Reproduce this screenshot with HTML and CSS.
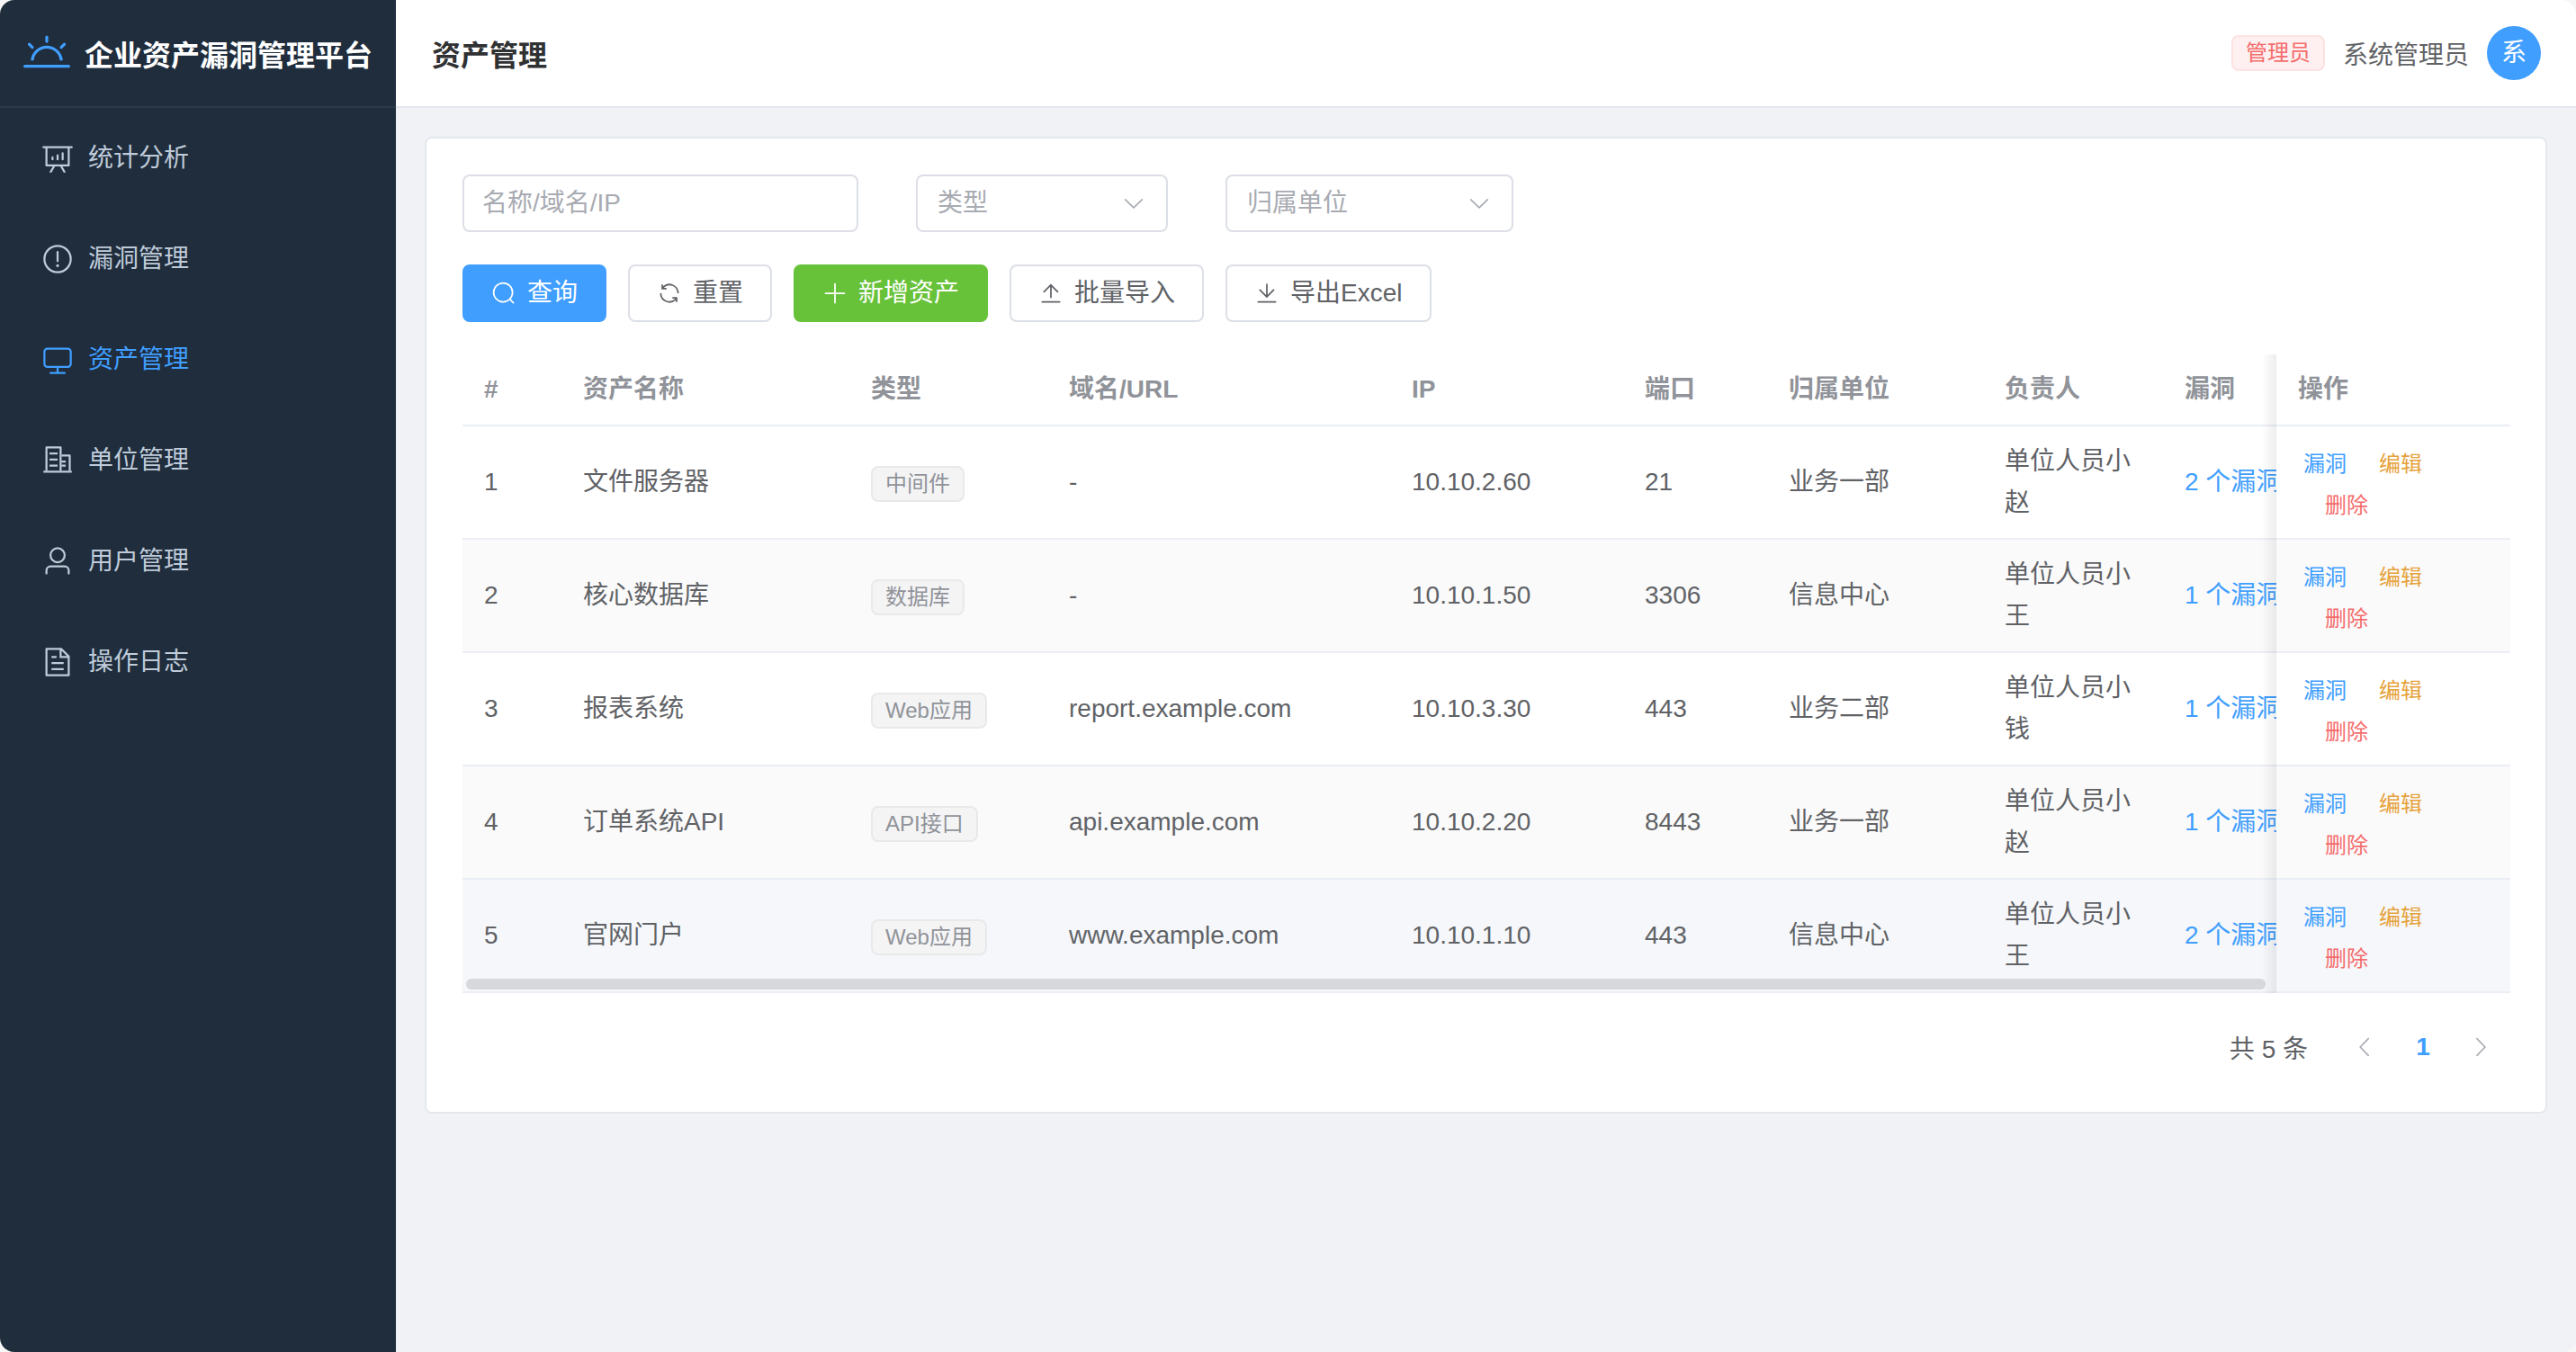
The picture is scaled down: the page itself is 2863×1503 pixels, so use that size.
FILE: index.html
```html
<!DOCTYPE html>
<html>
<head>
    <meta charset="utf-8">
    <title>资产管理</title>
    <link rel="stylesheet" href="styles.css">
</head>
<body>
    <div class="layout">
        <!-- Sidebar -->
        <aside class="sidebar">
            <div class="logo">
                <svg class="logo-icon" viewBox="0 0 1024 1024"><path d="M32 768h960a32 32 0 1 1 0 64H32a32 32 0 1 1 0-64m129.408-96a352 352 0 0 1 701.184 0h-64.32a288 288 0 0 0-572.544 0zM512 128a32 32 0 0 1 32 32v96a32 32 0 0 1-64 0v-96a32 32 0 0 1 32-32m407.296 168.704a32 32 0 0 1 0 45.248l-67.84 67.84a32 32 0 1 1-45.248-45.248l67.84-67.84a32 32 0 0 1 45.248 0zm-814.592 0a32 32 0 0 1 45.248 0l67.84 67.84a32 32 0 1 1-45.248 45.248l-67.84-67.84a32 32 0 0 1 0-45.248"/></svg>
                <span>企业资产漏洞管理平台</span>
            </div>
            <nav class="menu">
                <a class="menu-item">
                    <svg class="menu-icon" viewBox="0 0 1024 1024"><path d="m665.216 768 110.848 192h-73.856L591.36 768H433.024L322.176 960H248.32l110.848-192H160a32 32 0 0 1-32-32V192H64a32 32 0 0 1 0-64h896a32 32 0 1 1 0 64h-64v544a32 32 0 0 1-32 32zM832 192H192v512h640zM352 448a32 32 0 0 1 32 32v64a32 32 0 0 1-64 0v-64a32 32 0 0 1 32-32m160-64a32 32 0 0 1 32 32v128a32 32 0 0 1-64 0V416a32 32 0 0 1 32-32m160-64a32 32 0 0 1 32 32v192a32 32 0 1 1-64 0V352a32 32 0 0 1 32-32"/></svg>
                    统计分析
                </a>
                <a class="menu-item">
                    <svg class="menu-icon" viewBox="0 0 1024 1024"><path d="M512 64a448 448 0 1 1 0 896 448 448 0 0 1 0-896m0 832a384 384 0 0 0 0-768 384 384 0 0 0 0 768m48-176a48 48 0 1 1-96 0 48 48 0 0 1 96 0m-48-464a32 32 0 0 1 32 32v288a32 32 0 0 1-64 0V288a32 32 0 0 1 32-32"/></svg>
                    漏洞管理
                </a>
                <a class="menu-item active">
                    <svg class="menu-icon" viewBox="0 0 1024 1024"><path d="M544 768v128h192a32 32 0 1 1 0 64H288a32 32 0 1 1 0-64h192V768H192A128 128 0 0 1 64 640V256a128 128 0 0 1 128-128h640a128 128 0 0 1 128 128v384a128 128 0 0 1-128 128zM192 192a64 64 0 0 0-64 64v384a64 64 0 0 0 64 64h640a64 64 0 0 0 64-64V256a64 64 0 0 0-64-64z"/></svg>
                    资产管理
                </a>
                <a class="menu-item">
                    <svg class="menu-icon" viewBox="0 0 1024 1024"><path d="M64 832h896v64H64z"/><path d="M160 64h448a32 32 0 0 1 32 32v736h-64V128H192v704h-64V96a32 32 0 0 1 32-32"/><path d="M256 256h256v64H256zm0 192h256v64H256zm0 192h256v64H256z"/><path d="M640 320h256a32 32 0 0 1 32 32v480h-64V384H640z"/><path d="M640 512h128v64H640zm0 128h128v64H640z"/></svg>
                    单位管理
                </a>
                <a class="menu-item">
                    <svg class="menu-icon" viewBox="0 0 1024 1024"><path d="M512 512a192 192 0 1 0 0-384 192 192 0 0 0 0 384m0 64a256 256 0 1 1 0-512 256 256 0 0 1 0 512m320 320v-96a96 96 0 0 0-96-96H288a96 96 0 0 0-96 96v96a32 32 0 1 1-64 0v-96a160 160 0 0 1 160-160h448a160 160 0 0 1 160 160v96a32 32 0 1 1-64 0"/></svg>
                    用户管理
                </a>
                <a class="menu-item">
                    <svg class="menu-icon" viewBox="0 0 1024 1024"><path d="M832 384H576V128H192v768h640zm-26.496-64L640 154.496V320zM160 64h480l256 256v608a32 32 0 0 1-32 32H160a32 32 0 0 1-32-32V96a32 32 0 0 1 32-32m160 448h384v64H320zm0-192h160v64H320zm0 384h384v64H320z"/></svg>
                    操作日志
                </a>
            </nav>
        </aside>

        <div class="right-side">
            <!-- Top bar -->
            <header class="topbar">
                <h1 class="page-title">资产管理</h1>
                <div class="user-box">
                    <span class="role-tag">管理员</span>
                    <span class="user-name">系统管理员</span>
                    <span class="avatar">系</span>
                </div>
            </header>

            <main class="main">
                <section class="card">
                    <!-- Filters -->
                    <div class="filters">
                        <div class="field field-search">名称/域名/IP</div>
                        <div class="field field-type">
                            <span>类型</span>
                            <svg class="arrow" viewBox="0 0 1024 1024"><path d="M831.872 340.864 512 652.672 192.128 340.864a30.592 30.592 0 0 0-42.752 0 29.12 29.12 0 0 0 0 41.6L489.664 714.24a32 32 0 0 0 44.672 0l340.288-331.712a29.12 29.12 0 0 0 0-41.728 30.592 30.592 0 0 0-42.752 0z"/></svg>
                        </div>
                        <div class="field field-unit">
                            <span>归属单位</span>
                            <svg class="arrow" viewBox="0 0 1024 1024"><path d="M831.872 340.864 512 652.672 192.128 340.864a30.592 30.592 0 0 0-42.752 0 29.12 29.12 0 0 0 0 41.6L489.664 714.24a32 32 0 0 0 44.672 0l340.288-331.712a29.12 29.12 0 0 0 0-41.728 30.592 30.592 0 0 0-42.752 0z"/></svg>
                        </div>
                    </div>

                    <!-- Action buttons -->
                    <div class="actions">
                        <button class="btn btn-primary">
                            <svg class="btn-icon" viewBox="0 0 1024 1024"><path d="m795.904 750.72 124.992 124.928a32 32 0 0 1-45.248 45.248L750.656 795.904a416 416 0 1 1 45.248-45.248zM480 832a352 352 0 1 0 0-704 352 352 0 0 0 0 704"/></svg>
                            查询
                        </button>
                        <button class="btn">
                            <svg class="btn-icon" viewBox="0 0 1024 1024"><path d="M771.776 794.88A384 384 0 0 1 128 512h64a320 320 0 0 0 555.712 216.448H654.72a32 32 0 1 1 0-64h149.056a32 32 0 0 1 32 32v148.928a32 32 0 1 1-64 0v-50.56zM276.288 295.616h92.992a32 32 0 0 1 0 64H220.16a32 32 0 0 1-32-32V178.56a32 32 0 0 1 64 0v50.56A384 384 0 0 1 896.128 512h-64a320 320 0 0 0-555.776-216.384z"/></svg>
                            重置
                        </button>
                        <button class="btn btn-success">
                            <svg class="btn-icon" viewBox="0 0 1024 1024"><path d="M480 480V128a32 32 0 0 1 64 0v352h352a32 32 0 0 1 0 64H544v352a32 32 0 1 1-64 0V544H128a32 32 0 0 1 0-64z"/></svg>
                            新增资产
                        </button>
                        <button class="btn">
                            <svg class="btn-icon" viewBox="0 0 1024 1024"><path d="M160 832h704a32 32 0 1 1 0 64H160a32 32 0 1 1 0-64m384-578.304V704h-64V247.296L237.248 490.048 192 444.8 508.8 128l316.8 316.8-45.312 45.248z"/></svg>
                            批量导入
                        </button>
                        <button class="btn">
                            <svg class="btn-icon" viewBox="0 0 1024 1024"><path d="M160 832h704a32 32 0 1 1 0 64H160a32 32 0 1 1 0-64m384-253.696 236.288-236.352 45.248 45.248L508.8 704 192 387.2l45.248-45.248L480 584.704V128h64z"/></svg>
                            导出Excel
                        </button>
                    </div>

                    <!-- Asset table -->
                    <div class="table-wrap">
                        <table class="asset-table">
                            <colgroup>
                                <col class="col-no"><col class="col-name"><col class="col-type"><col class="col-url"><col class="col-ip">
                                <col class="col-port"><col class="col-unit"><col class="col-owner"><col class="col-vuln"><col class="col-op">
                            </colgroup>
                            <thead>
                                <tr>
                                    <th>#</th><th>资产名称</th><th>类型</th><th>域名/URL</th><th>IP</th>
                                    <th>端口</th><th>归属单位</th><th>负责人</th><th>漏洞</th><th class="op-cell">操作</th>
                                </tr>
                            </thead>
                            <tbody>
                                <tr>
                                    <td>1</td><td>文件服务器</td><td><span class="tag">中间件</span></td><td>-</td><td>10.10.2.60</td>
                                    <td>21</td><td>业务一部</td><td>单位人员小赵</td><td class="vuln-cell"><a class="vuln-link">2 个漏洞</a></td>
                                    <td class="op-cell"><a class="op-link link-blue">漏洞</a><a class="op-link link-orange">编辑</a><a class="op-link link-red">删除</a></td>
                                </tr>
                                <tr class="striped">
                                    <td>2</td><td>核心数据库</td><td><span class="tag">数据库</span></td><td>-</td><td>10.10.1.50</td>
                                    <td>3306</td><td>信息中心</td><td>单位人员小王</td><td class="vuln-cell"><a class="vuln-link">1 个漏洞</a></td>
                                    <td class="op-cell"><a class="op-link link-blue">漏洞</a><a class="op-link link-orange">编辑</a><a class="op-link link-red">删除</a></td>
                                </tr>
                                <tr>
                                    <td>3</td><td>报表系统</td><td><span class="tag">Web应用</span></td><td>report.example.com</td><td>10.10.3.30</td>
                                    <td>443</td><td>业务二部</td><td>单位人员小钱</td><td class="vuln-cell"><a class="vuln-link">1 个漏洞</a></td>
                                    <td class="op-cell"><a class="op-link link-blue">漏洞</a><a class="op-link link-orange">编辑</a><a class="op-link link-red">删除</a></td>
                                </tr>
                                <tr class="striped">
                                    <td>4</td><td>订单系统API</td><td><span class="tag">API接口</span></td><td>api.example.com</td><td>10.10.2.20</td>
                                    <td>8443</td><td>业务一部</td><td>单位人员小赵</td><td class="vuln-cell"><a class="vuln-link">1 个漏洞</a></td>
                                    <td class="op-cell"><a class="op-link link-blue">漏洞</a><a class="op-link link-orange">编辑</a><a class="op-link link-red">删除</a></td>
                                </tr>
                                <tr class="hovered">
                                    <td>5</td><td>官网门户</td><td><span class="tag">Web应用</span></td><td>www.example.com</td><td>10.10.1.10</td>
                                    <td>443</td><td>信息中心</td><td>单位人员小王</td><td class="vuln-cell"><a class="vuln-link">2 个漏洞</a></td>
                                    <td class="op-cell"><a class="op-link link-blue">漏洞</a><a class="op-link link-orange">编辑</a><a class="op-link link-red">删除</a></td>
                                </tr>
                            </tbody>
                        </table>
                        <div class="scroll-thumb"></div>
                    </div>

                    <!-- Pagination -->
                    <div class="pagination">
                        <span class="total">共 5 条</span>
                        <span class="page-btn">
                            <svg class="page-arrow" viewBox="0 0 1024 1024"><path d="M609.408 149.376 277.76 489.6a32 32 0 0 0 0 44.672l331.648 340.352a29.12 29.12 0 0 0 41.728 0 30.592 30.592 0 0 0 0-42.752L339.264 512l311.872-319.872a30.592 30.592 0 0 0 0-42.688 29.12 29.12 0 0 0-41.728-.064z"/></svg>
                        </span>
                        <span class="page-btn page-current">1</span>
                        <span class="page-btn">
                            <svg class="page-arrow" viewBox="0 0 1024 1024"><path d="M340.864 149.312a30.592 30.592 0 0 0 0 42.752L652.736 512 340.864 831.872a30.592 30.592 0 0 0 0 42.752 29.12 29.12 0 0 0 41.728 0L714.24 534.336a32 32 0 0 0 0-44.672L382.592 149.376a29.12 29.12 0 0 0-41.728 0z"/></svg>
                        </span>
                    </div>
                </section>
            </main>
        </div>
    </div>
</body>
</html>
```

FILE: styles.css
```css
/* Page frame */
html, body {
    height: 100%;
    margin: 0;
}

body {
    background-color: #f6f6f6;
    color: #606266;
    font-family: "Liberation Sans", "Noto Sans CJK SC", sans-serif;
    font-size: 28px;
}

svg {
    fill: currentColor;
    flex-shrink: 0;
}

.layout {
    display: flex;
    height: 100%;
    border-radius: 16px;
    overflow: hidden;
}

/* Sidebar */
.sidebar {
    width: 440px;
    flex-shrink: 0;
    background-color: #1f2d3d;
}

.logo {
    display: flex;
    align-items: center;
    gap: 16px;
    height: 118px;
    padding-left: 26px;
    border-bottom: 2px solid #2b3949;
    color: #fff;
    font-size: 32px;
    font-weight: bold;
}

.logo-icon {
    width: 52px;
    height: 52px;
    color: #409eff;
}

.menu-item {
    display: flex;
    align-items: center;
    gap: 16px;
    height: 112px;
    padding-left: 46px;
    color: #bfcbd9;
    line-height: 1;
}

.menu-item.active {
    color: #409eff;
}

.menu-icon {
    width: 36px;
    height: 36px;
}

/* Right side */
.right-side {
    flex: 1;
    min-width: 0;
    display: flex;
    flex-direction: column;
    background-color: #f0f2f5;
}

.topbar {
    display: flex;
    align-items: center;
    justify-content: space-between;
    height: 118px;
    padding: 0 39px 0 40px;
    background-color: #fff;
    border-bottom: 2px solid #e4e7ed;
}

.page-title {
    margin: 0;
    color: #303133;
    font-size: 32px;
    font-weight: bold;
}

.user-box {
    display: flex;
    align-items: center;
    gap: 20px;
}

.role-tag {
    box-sizing: border-box;
    height: 40px;
    line-height: 36px;
    padding: 0 14px;
    background-color: #fef0f0;
    border: 2px solid #fde2e2;
    border-radius: 8px;
    color: #f56c6c;
    font-size: 24px;
}

.avatar {
    width: 60px;
    height: 60px;
    display: flex;
    align-items: center;
    justify-content: center;
    border-radius: 50%;
    background-color: #409eff;
    color: #fff;
    line-height: 1;
}

/* Card */
.main {
    padding: 32px;
}

.card {
    padding: 40px;
    background-color: #fff;
    border: 2px solid #e4e7ed;
    border-radius: 8px;
}

.filters {
    display: flex;
    gap: 64px;
    margin-bottom: 36px;
}

.field {
    box-sizing: border-box;
    height: 64px;
    display: flex;
    align-items: center;
    justify-content: space-between;
    padding: 0 22px;
    border: 2px solid #dcdfe6;
    border-radius: 8px;
    color: #a8abb2;
    line-height: 1;
}

.field-search {
    width: 440px;
    padding: 0 20px;
}

.field-type {
    width: 280px;
}

.field-unit {
    width: 320px;
}

.arrow {
    width: 28px;
    height: 28px;
    color: #a8abb2;
}

.actions {
    display: flex;
    gap: 24px;
    margin-bottom: 36px;
}

.btn {
    box-sizing: border-box;
    height: 64px;
    display: flex;
    align-items: center;
    gap: 12px;
    padding: 0 30px;
    background-color: #fff;
    border: 2px solid #dcdfe6;
    border-radius: 8px;
    color: #606266;
    font-family: inherit;
    font-size: 28px;
    line-height: 1;
}

.btn-primary {
    background-color: #409eff;
    border-color: #409eff;
    color: #fff;
}

.btn-success {
    background-color: #67c23a;
    border-color: #67c23a;
    color: #fff;
}

.btn-icon {
    width: 28px;
    height: 28px;
}

/* Table */
.table-wrap {
    position: relative;
}

.asset-table {
    width: 2276px;
    table-layout: fixed;
    border-collapse: separate;
    border-spacing: 0;
}

.col-no { width: 110px; }
.col-name { width: 320px; }
.col-type { width: 220px; }
.col-url { width: 381px; }
.col-ip { width: 259px; }
.col-port { width: 160px; }
.col-unit { width: 240px; }
.col-owner { width: 200px; }
.col-vuln { width: 126px; }
.col-op { width: 260px; }

.asset-table th,
.asset-table td {
    padding: 16px 24px;
    border-bottom: 2px solid #ebeef5;
    line-height: 46px;
    text-align: left;
    word-break: break-all;
}

.asset-table th {
    color: #909399;
    font-weight: bold;
}

.striped td {
    background-color: #fafafa;
}

.hovered td {
    background-color: #f5f7fa;
}

.tag {
    display: inline-block;
    height: 40px;
    line-height: 36px;
    box-sizing: border-box;
    padding: 0 14px;
    vertical-align: middle;
    background-color: #f4f4f5;
    border: 2px solid #e9e9eb;
    border-radius: 8px;
    color: #909399;
    font-size: 24px;
}

.asset-table .vuln-cell {
    overflow: hidden;
    white-space: nowrap;
    padding-right: 0;
}

.vuln-link {
    color: #409eff;
}

/* Fixed column with its shadow */
.op-cell {
    position: relative;
}

.asset-table td.op-cell {
    padding-top: 19px;
    padding-bottom: 13px;
    font-size: 24px;
}

.op-cell::before {
    content: "";
    position: absolute;
    top: 0;
    bottom: -2px;
    left: -16px;
    width: 16px;
    background: linear-gradient(to left, rgba(0, 0, 0, 0.07), rgba(0, 0, 0, 0));
}

.op-link {
    display: inline-block;
    margin-left: 30px;
    margin-right: -6px;
    padding: 0 6px;
}

.op-link:first-child {
    margin-left: 0;
}

.link-blue { color: #409eff; }
.link-orange { color: #e6a23c; }
.link-red { color: #f56c6c; margin-left: 24px; }

.scroll-thumb {
    position: absolute;
    left: 4px;
    bottom: 4px;
    width: 2000px;
    height: 12px;
    border-radius: 6px;
    background-color: rgba(144, 147, 153, 0.3);
}

/* Pagination */
.pagination {
    display: flex;
    align-items: center;
    justify-content: flex-end;
    margin-top: 28px;
    height: 64px;
}

.total {
    margin-right: 32px;
}

.page-btn {
    width: 64px;
    height: 64px;
    display: flex;
    align-items: center;
    justify-content: center;
    color: #a8abb2;
    line-height: 1;
}

.page-current {
    color: #409eff;
    font-weight: bold;
}

.page-arrow {
    width: 28px;
    height: 28px;
}
```
